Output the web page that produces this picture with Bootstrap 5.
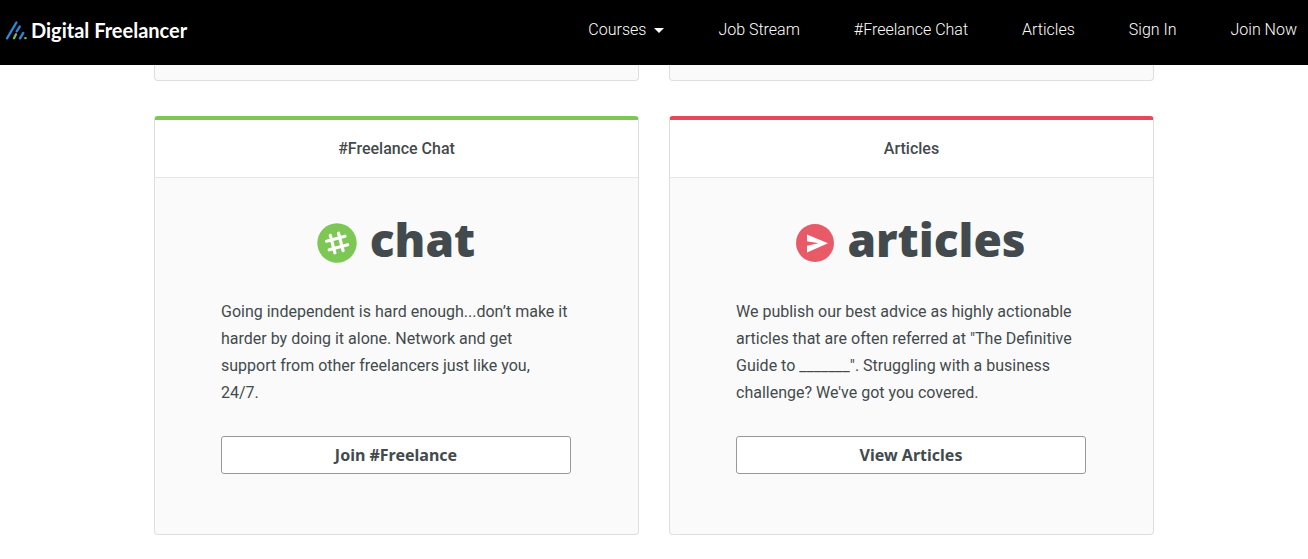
<!DOCTYPE html>
<html lang="en">
<head>
<meta charset="utf-8">
<meta name="viewport" content="width=device-width, initial-scale=1">
<title>Digital Freelancer</title>
<link href="https://cdn.jsdelivr.net/npm/bootstrap@5.3.0/dist/css/bootstrap.min.css" rel="stylesheet">
<style>
  body { font-family: Roboto, sans-serif; color: #434a4d; }
  .site-bar { --bs-navbar-nav-link-padding-x: 0; background: #000; min-height: 65px; padding: 0 11px 6px 5px; }
  .site-bar .navbar-brand { color: #fff; font: 700 20px/30px Lato, sans-serif; gap: 4px; }
  .site-links { column-gap: 54px; }
  .site-links .nav-link { color: #fff; font-size: 16px; line-height: 24px; font-weight: 300; padding-top: 0; padding-bottom: 0; }
  .site-links .dropdown-toggle::after { margin-left: 8px; border-width: 5px; border-bottom: 0; vertical-align: 2px; }
  .tracks { max-width: 1030px; padding: 0 15px; }
  .tracks > .row { --bs-gutter-x: 30px; }
  .tracks > .row > * { margin-bottom: 35px; }
  .track { border: 1px solid #dedede; border-radius: 4px; background: #fafafa; overflow: hidden; }
  .track-tail { height: 16px; border-top: 0; border-top-left-radius: 0; border-top-right-radius: 0; }
  .track-green { border-top: 4px solid #7dc855; }
  .track-red { border-top: 4px solid #e64759; }
  .track .card-header { background: #fff; border-color: #e6e6e6; padding: 16px; }
  .track h2 { font-size: 16px; line-height: 25px; font-weight: 500; }
  .track .card-body { padding: 32px 67px 60px 66px; }
  .wordmark { font: 800 46px/58px "Open Sans", sans-serif; gap: 13px; margin-bottom: 30px; }
  .wordmark svg { margin-top: 8px; }
  .track p { font-size: 16px; line-height: 27px; margin-bottom: 30px; }
  .btn-track { --bs-btn-color: #434a4d; --bs-btn-bg: #fff; --bs-btn-border-color: #989898; --bs-btn-border-radius: 3px;
    --bs-btn-hover-bg: #f1f1f1; --bs-btn-hover-border-color: #777;
    font: 700 16px/24px "Noto Sans", sans-serif; }
</style>
</head>
<body>
<nav class="navbar navbar-expand site-bar flex-wrap justify-content-between" aria-label="Main">
  <a class="navbar-brand d-flex align-items-center p-0 m-0" href="#">
    <svg width="22" height="20" viewBox="0 0 22 20" fill="none" stroke="#2e86d6" stroke-width="2.4" stroke-linecap="round" aria-hidden="true">
      <path d="M2 18.300 11.400 2.500M11.700 11.300l3-4.700M15 18.300l3.300-5.400"/>
      <path d="m9 18.300 2-4M20.300 18.100h.3" stroke="#76b562"/>
    </svg>
    <span>Digital Freelancer</span>
  </a>
  <ul class="navbar-nav flex-wrap site-links">
    <li class="nav-item dropdown"><a class="nav-link dropdown-toggle" href="#" role="button" data-bs-toggle="dropdown" aria-expanded="false">Courses</a></li>
    <li class="nav-item"><a class="nav-link" href="#">Job Stream</a></li>
    <li class="nav-item"><a class="nav-link" href="#">#Freelance Chat</a></li>
    <li class="nav-item"><a class="nav-link" href="#">Articles</a></li>
    <li class="nav-item"><a class="nav-link" href="#">Sign In</a></li>
    <li class="nav-item"><a class="nav-link" href="#">Join Now</a></li>
  </ul>
</nav>
<main class="container-fluid tracks">
  <div class="row row-cols-1 row-cols-md-2">
    <div class="col"><div class="card track track-tail"></div></div>
    <div class="col"><div class="card track track-tail"></div></div>
    <div class="col">
      <section class="card track track-green h-100">
        <div class="card-header text-center"><h2 class="m-0">#Freelance Chat</h2></div>
        <div class="card-body">
          <div class="wordmark d-flex align-items-center justify-content-center">
            <svg width="40" height="40" viewBox="0 0 40 40" aria-hidden="true">
              <circle cx="20" cy="20" r="19.700" fill="#7dc855"/>
              <path d="m13.300 12.300 4.600 17.500M21.500 10.200l4.600 17.500M9.500 18.200l18.500-5M12.200 26.800l18.500-5" fill="none" stroke="#fff" stroke-width="3.200" stroke-linecap="round"/>
            </svg>
            <span>chat</span>
          </div>
          <p>Going independent is hard enough...don’t make it harder by doing it alone. Network and get support from other freelancers just like you, 24/7.</p>
          <button type="button" class="btn btn-track w-100">Join #Freelance</button>
        </div>
      </section>
    </div>
    <div class="col">
      <section class="card track track-red h-100">
        <div class="card-header text-center"><h2 class="m-0">Articles</h2></div>
        <div class="card-body">
          <div class="wordmark d-flex align-items-center justify-content-center">
            <svg width="38" height="38" viewBox="0 0 38 38" aria-hidden="true">
              <circle cx="19" cy="19" r="19" fill="#e85a68"/>
              <path d="M11 10.500 32 19.300 11 28.500v-6.800l11.500-2.400L11 17.200z" fill="#fff"/>
            </svg>
            <span>articles</span>
          </div>
          <p>We publish our best advice as highly actionable articles that are often referred at "The Definitive Guide to _______". Struggling with a business challenge? We've got you covered.</p>
          <button type="button" class="btn btn-track w-100">View Articles</button>
        </div>
      </section>
    </div>
  </div>
</main>
<script src="https://cdn.jsdelivr.net/npm/bootstrap@5.3.0/dist/js/bootstrap.bundle.min.js"></script>
</body>
</html>
